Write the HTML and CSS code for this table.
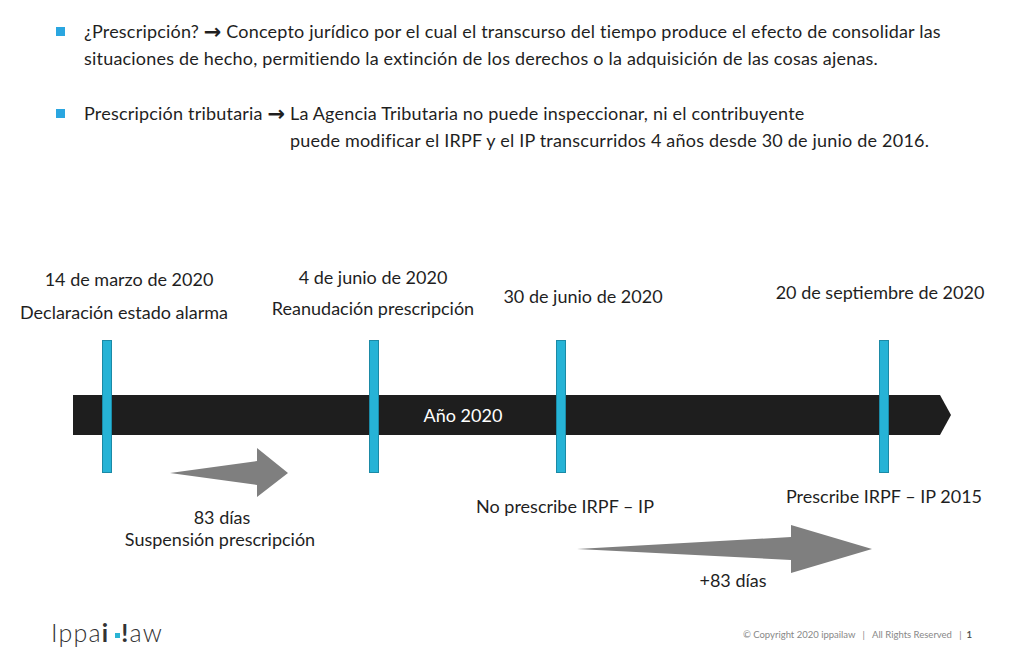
FILE: index.html
```html
<!DOCTYPE html>
<html lang="es">
<head>
<meta charset="utf-8">
<title>Prescripción</title>
<link rel="stylesheet" href="styles.css">
</head>
<body>
<div class="slide">
  <ul class="bullets">
    <li class="item">
      <span class="sq"></span>
      <div class="txt">¿Prescripción? <span class="arr">→</span> Concepto jurídico por el cual el transcurso del tiempo produce el efecto de consolidar las<br>situaciones de hecho, permitiendo la extinción de los derechos o la adquisición de las cosas ajenas.</div>
    </li>
    <li class="item">
      <span class="sq"></span>
      <div class="txt row"><span class="lead">Prescripción tributaria <span class="arr">→</span> </span><span class="rest">La Agencia Tributaria no puede inspeccionar, ni el contribuyente<br>puede modificar el IRPF y el IP transcurridos 4 años desde 30 de junio de 2016.</span></div>
    </li>
  </ul>

  <div class="diagram">
    <svg class="art" width="1024" height="360" viewBox="0 0 1024 360">
      <polygon points="73,145 940,145 951,165 940,185 73,185" fill="#1e1e1e"/>
      <g fill="#26b3d6" stroke="#1b8aa6" stroke-width="1">
        <rect x="102.5" y="90.5" width="9" height="132"/>
        <rect x="369.5" y="90.5" width="9" height="132"/>
        <rect x="556.5" y="90.5" width="9" height="132"/>
        <rect x="879.5" y="90.5" width="9" height="132"/>
      </g>
      <polygon points="170,223 257,211 257,198 288,223 257,247 257,235" fill="#7f7f7f"/>
      <polygon points="577,299 791,287 791,275 872,299 791,323 791,310" fill="#7f7f7f"/>
    </svg>
    <div class="lbl l1">14 de marzo de 2020</div>
    <div class="lbl l2">Declaración estado alarma</div>
    <div class="lbl l3">4 de junio de 2020</div>
    <div class="lbl l4">Reanudación prescripción</div>
    <div class="lbl l5">30 de junio de 2020</div>
    <div class="lbl l6">20 de septiembre de 2020</div>
    <div class="lbl l7">Año 2020</div>
    <div class="lbl l8">83 días</div>
    <div class="lbl l9">Suspensión prescripción</div>
    <div class="lbl l10">No prescribe IRPF – IP</div>
    <div class="lbl l11">Prescribe IRPF – IP 2015</div>
    <div class="lbl l12">+83 días</div>
  </div>

  <div class="footer">
    <div class="logo">Ippa<b>i</b><span class="dot"></span><b>!</b>aw</div>
    <div class="copy">© Copyright 2020 ippailaw &nbsp; | &nbsp; All Rights Reserved &nbsp; | &nbsp;<b>1</b></div>
  </div>
</div>
</body>
</html>
```

FILE: styles.css
```css
html, body {
  margin: 0;
  padding: 0;
  background: #ffffff;
}
.slide {
  width: 1024px;
  height: 660px;
  overflow: hidden;
  font-family: "Lato", "Liberation Sans", sans-serif;
  color: #1f1f1f;
  display: flex;
  flex-direction: column;
}
.bullets {
  list-style: none;
  margin: 0;
  padding: 18px 0 0 56px;
  display: flex;
  flex-direction: column;
  gap: 28px;
  height: 136px;
}
.item {
  display: flex;
  align-items: flex-start;
  font-size: 18px;
  line-height: 27px;
  letter-spacing: 0.2px;
}
.arr {
  font-family: "DejaVu Sans", sans-serif;
  font-weight: 700;
  font-size: 21px;
  line-height: 1;
  letter-spacing: 0;
  vertical-align: -1px;
}
.sq {
  width: 9px;
  height: 9px;
  background: #2aa6e0;
  margin-top: 9px;
  margin-right: 19px;
  flex: none;
}
.row {
  display: flex;
  white-space: pre;
}
.diagram {
  position: relative;
  margin-top: 96px;
  height: 360px;
  flex: none;
}
.art {
  display: block;
}
.lbl {
  position: absolute;
  transform: translate(-50%, -50%);
  white-space: nowrap;
  font-size: 18px;
  line-height: 22px;
}
.l1 { left: 129px; top: 29px; }
.l2 { left: 124px; top: 62px; }
.l3 { left: 373px; top: 27px; }
.l4 { left: 373px; top: 58px; }
.l5 { left: 583px; top: 46px; }
.l6 { left: 880px; top: 42px; }
.l7 { left: 463px; top: 165px; color: #ffffff; }
.l8 { left: 222px; top: 267px; }
.l9 { left: 220px; top: 289px; }
.l10 { left: 565px; top: 256px; }
.l11 { left: 884px; top: 246px; }
.l12 { left: 733px; top: 330px; }
.footer {
  display: flex;
  align-items: center;
  justify-content: space-between;
  padding: 0 52px 0 51px;
  height: 50px;
}
.logo {
  font-size: 25px;
  font-weight: 300;
  color: #333;
  letter-spacing: 1.2px;
  display: flex;
  align-items: baseline;
  margin-top: -6px;
}
.logo b {
  font-weight: 700;
}
.dot {
  display: inline-block;
  width: 5px;
  height: 5px;
  background: #2ab4d4;
  margin: 0 1px 0 6px;
  align-self: center;
  position: relative;
  top: 3px;
}
.copy {
  font-size: 9.5px;
  color: #888;
  margin-top: -2px;
}
.copy b {
  color: #555;
}
```
